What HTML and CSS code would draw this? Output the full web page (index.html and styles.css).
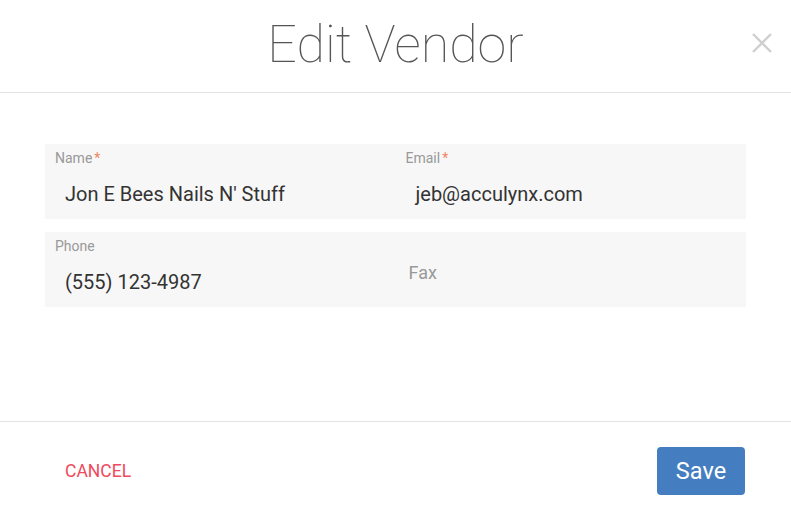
FILE: index.html
```html
<!DOCTYPE html>
<html lang="en">
<head>
    <meta charset="UTF-8">
    <title>Edit Vendor</title>
    <link rel="stylesheet" href="styles.css">
</head>
<body>

<div class="modal">
    <header class="modal-head">
        <div></div>
        <h1>Edit Vendor</h1>
        <div class="close-wrap">
            <svg class="close" width="22" height="22" viewBox="0 0 22 22">
                <path d="M2 2 L20 20 M20 2 L2 20" stroke="#cfcfcf" stroke-width="2.4" fill="none"/>
            </svg>
        </div>
    </header>

    <div class="modal-body">
        <div class="row">
            <div class="field">
                <label>Name<span class="req">*</span></label>
                <div class="value">Jon E Bees Nails N' Stuff</div>
            </div>
            <div class="field">
                <label>Email<span class="req">*</span></label>
                <div class="value">jeb@acculynx.com</div>
            </div>
        </div>
        <div class="row">
            <div class="field">
                <label>Phone</label>
                <div class="value">(555) 123-4987</div>
            </div>
            <div class="field">
                <div class="placeholder">Fax</div>
            </div>
        </div>
    </div>

    <footer class="modal-foot">
        <a href="#" class="cancel">CANCEL</a>
        <button class="save">Save</button>
    </footer>
</div>

</body>
</html>
```

FILE: styles.css
```css
body {
    font-family: Roboto, "Noto Sans", sans-serif;
    margin: 0;
    padding: 0;
    background: #fff;
    color: #333;
}
.modal {
    width: 791px;
    height: 513px;
    display: flex;
    flex-direction: column;
}
.modal-head {
    height: 92px;
    border-bottom: 1px solid #e3e3e3;
    display: grid;
    grid-template-columns: 1fr auto 1fr;
    align-items: center;
}
.modal-head h1 {
    margin: 0;
    font-size: 52px;
    font-weight: 100;
    color: #555;
    padding-bottom: 4px;
}
.close-wrap {
    display: flex;
    justify-content: flex-end;
    padding-right: 18px;
    padding-bottom: 6px;
}
.modal-body {
    height: 277px;
    padding: 51px 45px 0;
    border-bottom: 1px solid #e3e3e3;
    display: flex;
    flex-direction: column;
    gap: 13px;
}
.row {
    display: grid;
    grid-template-columns: 1fr 1fr;
    height: 75px;
    background: #f7f7f7;
}
.field {
    padding: 5px 10px 0;
}
.field label {
    display: block;
    font-size: 14px;
    line-height: 18px;
    color: #999;
}
.req {
    color: #f2845f;
    margin-left: 2px;
}
.value {
    margin: 14px 0 0 10px;
    font-size: 20px;
    line-height: 26px;
    color: #333;
}
.placeholder {
    padding: 25px 0 0 3px;
    font-size: 18px;
    line-height: 22px;
    color: #999;
}
.modal-foot {
    flex: 1;
    display: flex;
    align-items: center;
    justify-content: space-between;
    padding: 6px 46px 0 65px;
}
.cancel {
    color: #ef4a5d;
    text-decoration: none;
    font-size: 17.5px;
}
.save {
    width: 88px;
    height: 48px;
    border: none;
    border-radius: 4px;
    background: #457ec0;
    color: #fff;
    font-family: Roboto, sans-serif;
    font-size: 23.5px;
    cursor: pointer;
}
```
